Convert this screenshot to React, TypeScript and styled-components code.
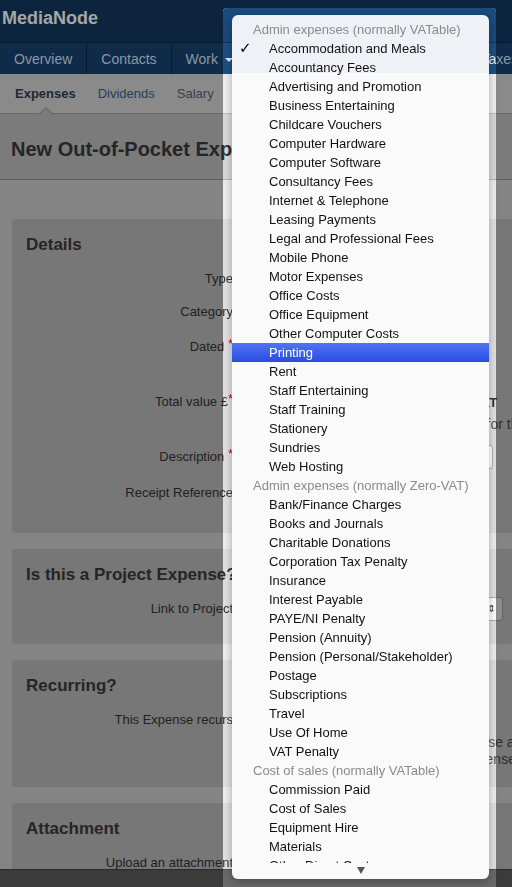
import React from "react";
import styled, { createGlobalStyle } from "styled-components";

const GlobalStyle = createGlobalStyle`
  html, body { margin: 0; padding: 0; overflow: hidden; }
  body {
    font-family: "Liberation Sans", Arial, sans-serif;
    background: #848484;
    width: 512px;
    height: 887px;
  }
`;

/* the page as seen through the modal dimming */
const DimScope = styled.div`
  --brand-bg: #0c243e;
  --brand-text: #a6a6a6;
  --nav-bg: #0f2b48;
  --nav-line: #081c31;
  --nav-text: #8a98a7;
  --sub-bg: #8a8a8a;
  --sub-line: #696969;
  --sub-active: #1d2833;
  --sub-link: #243f5c;
  --sub-muted: #36414d;
  --head-bg: #7b7b7b;
  --head-line: #616161;
  --title: #252525;
  --body-bg: #848484;
  --panel-bg: #777777;
  --label: #212121;
  --req: #a80000;
  --input-bg: #8c8c8c;
  --input-line: #616161;
  --text: #1f1f1f;
  --muted: #2c2c2c;
  --foot-bg: #3b3b3b;
  --foot-line: #2a2a2a;
`;

/* bright window right behind the open menu: same page, undimmed */
const LitScope = styled.div`
  --brand-bg: #1b4a7b;
  --brand-text: #e6e6e6;
  --nav-bg: #1e4f81;
  --nav-line: #123559;
  --nav-text: #e6edf4;
  --sub-bg: #f0f0f0;
  --sub-line: #c2c2c2;
  --sub-active: #333f4c;
  --sub-link: #3d6c9f;
  --sub-muted: #5a6f86;
  --head-bg: #dadada;
  --head-line: #b5b5b5;
  --title: #333;
  --body-bg: #eeeeee;
  --panel-bg: #e1e1e1;
  --label: #333;
  --req: #e00000;
  --input-bg: #ffffff;
  --input-line: #b0b0b0;
  --text: #333;
  --muted: #555;
  --foot-bg: #6a6a6a;
  --foot-line: #555;
  margin: -8px 0 0 -223px;
`;

const Page = styled.div`
  width: 540px;
  height: 887px;
  display: flex;
  flex-direction: column;
  overflow: hidden;
  background: var(--body-bg);
`;

const BrandBar = styled.header`
  flex: 0 0 42px;
  background: var(--brand-bg);
  padding-left: 2px;
`;

const Brand = styled.div`
  font-size: 18px;
  line-height: 36px;
  font-weight: bold;
  color: var(--brand-text);
`;

const NavBar = styled.nav`
  flex: 0 0 31px;
  width: 532px;
  background: var(--nav-bg);
  border-top: 1px solid var(--nav-line);
  display: flex;
`;

const NavTab = styled.div<{ $right?: boolean }>`
  display: flex;
  align-items: center;
  gap: 7px;
  padding: 0 14px;
  font-size: 14px;
  color: var(--nav-text);
  border-right: 1px solid var(--nav-line);
  ${(p) =>
    p.$right &&
    `margin-left: auto; border-right: none; border-left: 1px solid var(--nav-line);`}
`;

const Caret = styled.span`
  width: 0;
  height: 0;
  border-left: 4px solid transparent;
  border-right: 4px solid transparent;
  border-top: 4px solid var(--nav-text);
  margin-top: 2px;
`;

const SubNav = styled.div`
  flex: 0 0 39px;
  background: var(--sub-bg);
  border-bottom: 1px solid var(--sub-line);
  display: flex;
  padding-left: 4px;
`;

const SubTab = styled.div<{ $active?: boolean; $muted?: boolean }>`
  position: relative;
  display: flex;
  align-items: center;
  padding: 0 11px;
  font-size: 13px;
  color: ${(p) =>
    p.$active ? "var(--sub-active)" : p.$muted ? "var(--sub-muted)" : "var(--sub-link)"};
  font-weight: ${(p) => (p.$active ? "bold" : "normal")};
  ${(p) =>
    p.$active &&
    `&::after {
      content: "";
      position: absolute;
      left: 50%;
      bottom: -6px;
      width: 9px;
      height: 9px;
      margin-left: -4px;
      background: var(--head-bg);
      border-left: 1px solid var(--sub-line);
      border-top: 1px solid var(--sub-line);
      transform: rotate(45deg);
    }`}
`;

const PageHeader = styled.div`
  flex: 0 0 66px;
  box-sizing: border-box;
  padding: 6px 0 0 11px;
  background: var(--head-bg);
  border-bottom: 1px solid var(--head-line);
  display: flex;
  align-items: center;
`;

const PageTitle = styled.h1`
  margin: 0;
  font-size: 20px;
  font-weight: bold;
  color: var(--title);
  white-space: nowrap;
`;

const Main = styled.main`
  flex: 1;
  min-height: 0;
  overflow: hidden;
  padding: 39px 12px 0 12px;
`;

const Panel = styled.section`
  background: var(--panel-bg);
  border-radius: 4px;
  padding: 14px;
  margin-bottom: 16px;
`;

const PanelTitle = styled.h2`
  margin: 0 0 10px 0;
  font-size: 17px;
  line-height: 24px;
  font-weight: bold;
  color: var(--title);
`;

const Row = styled.div<{ $h: number }>`
  display: flex;
  height: ${(p) => p.$h}px;
`;

const Label = styled.label`
  flex: 0 0 207px;
  text-align: right;
  font-size: 13px;
  line-height: 24px;
  color: var(--label);
  white-space: nowrap;
`;

const Req = styled.span`
  color: var(--req);
  font-size: 13px;
  vertical-align: top;
  line-height: 18px;
`;

const Control = styled.div`
  margin-left: 10px;
  flex: 1;
  display: flex;
  flex-direction: column;
  gap: 2px;
`;

const ControlLine = styled.div`
  display: flex;
  align-items: center;
  gap: 10px;
  height: 24px;
`;

const Input = styled.div<{ $w: number }>`
  box-sizing: border-box;
  width: ${(p) => p.$w}px;
  height: 24px;
  background: var(--input-bg);
  border: 1px solid var(--input-line);
  border-radius: 3px;
  font-size: 13px;
  line-height: 22px;
  padding: 0 6px;
  color: var(--text);
`;

const SelectBox = styled(Input)`
  display: flex;
  justify-content: space-between;
  align-items: center;
`;

const Arrows = styled.span`
  font-family: "DejaVu Sans", sans-serif;
  font-size: 10px;
  color: var(--text);
`;

const Strong = styled.span`
  font-size: 13px;
  font-weight: bold;
  color: var(--text);
  white-space: nowrap;
`;

const Help = styled.div`
  font-size: 14px;
  line-height: 17px;
  color: var(--muted);
  white-space: nowrap;
`;

const Footer = styled.footer`
  flex: 0 0 17px;
  background: var(--foot-bg);
  border-top: 1px solid var(--foot-line);
`;

const Window = styled.div`
  position: fixed;
  left: 223px;
  top: 8px;
  width: 273px;
  height: 879px;
  overflow: hidden;
  border-radius: 4px 4px 0 0;
  z-index: 10;
`;

const Menu = styled.div`
  position: fixed;
  left: 232px;
  top: 15px;
  width: 257px;
  height: 864px;
  z-index: 20;
  background: linear-gradient(#eef2f6 0, #eef2f6 58px, #fafafa 58px);
  border-radius: 6px;
  box-shadow: 0 3px 10px rgba(0, 0, 0, 0.3);
  display: flex;
  flex-direction: column;
  overflow: hidden;
`;

const MenuList = styled.ul`
  list-style: none;
  margin: 0;
  padding: 5px 0 0 0;
  flex: 1;
  overflow: hidden;
`;

const Option = styled.li<{ $header?: boolean; $active?: boolean }>`
  position: relative;
  height: 19px;
  line-height: 19px;
  font-size: 13px;
  white-space: nowrap;
  padding-left: ${(p) => (p.$header ? 21 : 37)}px;
  color: ${(p) => (p.$active ? "#fff" : p.$header ? "#8a8a8a" : "#111")};
  background: ${(p) =>
    p.$active ? "linear-gradient(#5074f2, #2a4be0)" : "transparent"};
`;

const Check = styled.span`
  position: absolute;
  left: 7px;
  top: 0;
  font-family: "DejaVu Sans", sans-serif;
  font-weight: bold;
  font-size: 15px;
  color: #000;
`;

const ScrollArrow = styled.div`
  height: 16px;
  display: flex;
  justify-content: center;
  padding-top: 4px;
  box-sizing: border-box;
  &::before {
    content: "";
    width: 0;
    height: 0;
    border-left: 4px solid transparent;
    border-right: 4px solid transparent;
    border-top: 7px solid #555;
  }
`;

type Entry = { label: string; header?: boolean; checked?: boolean; active?: boolean };

const entries: Entry[] = [
  { label: "Admin expenses (normally VATable)", header: true },
  { label: "Accommodation and Meals", checked: true },
  { label: "Accountancy Fees" },
  { label: "Advertising and Promotion" },
  { label: "Business Entertaining" },
  { label: "Childcare Vouchers" },
  { label: "Computer Hardware" },
  { label: "Computer Software" },
  { label: "Consultancy Fees" },
  { label: "Internet & Telephone" },
  { label: "Leasing Payments" },
  { label: "Legal and Professional Fees" },
  { label: "Mobile Phone" },
  { label: "Motor Expenses" },
  { label: "Office Costs" },
  { label: "Office Equipment" },
  { label: "Other Computer Costs" },
  { label: "Printing", active: true },
  { label: "Rent" },
  { label: "Staff Entertaining" },
  { label: "Staff Training" },
  { label: "Stationery" },
  { label: "Sundries" },
  { label: "Web Hosting" },
  { label: "Admin expenses (normally Zero-VAT)", header: true },
  { label: "Bank/Finance Charges" },
  { label: "Books and Journals" },
  { label: "Charitable Donations" },
  { label: "Corporation Tax Penalty" },
  { label: "Insurance" },
  { label: "Interest Payable" },
  { label: "PAYE/NI Penalty" },
  { label: "Pension (Annuity)" },
  { label: "Pension (Personal/Stakeholder)" },
  { label: "Postage" },
  { label: "Subscriptions" },
  { label: "Travel" },
  { label: "Use Of Home" },
  { label: "VAT Penalty" },
  { label: "Cost of sales (normally VATable)", header: true },
  { label: "Commission Paid" },
  { label: "Cost of Sales" },
  { label: "Equipment Hire" },
  { label: "Materials" },
  { label: "Other Direct Costs" },
  { label: "Subcontractors" },
];

function ExpensePage() {
  return (
    <Page>
      <BrandBar>
        <Brand>MediaNode</Brand>
      </BrandBar>
      <NavBar>
        <NavTab>Overview</NavTab>
        <NavTab>Contacts</NavTab>
        <NavTab>
          Work <Caret />
        </NavTab>
        <NavTab>Accounts</NavTab>
        <NavTab $right>Taxes</NavTab>
      </NavBar>
      <SubNav>
        <SubTab $active>Expenses</SubTab>
        <SubTab>Dividends</SubTab>
        <SubTab $muted>Salary</SubTab>
      </SubNav>
      <PageHeader>
        <PageTitle>New Out-of-Pocket Expense Entry</PageTitle>
      </PageHeader>
      <Main>
        <Panel>
          <PanelTitle>Details</PanelTitle>
          <Row $h={33}>
            <Label>Type</Label>
            <Control>
              <ControlLine>
                <Help>Out-of-Pocket Expense</Help>
              </ControlLine>
            </Control>
          </Row>
          <Row $h={35}>
            <Label>Category</Label>
            <Control>
              <SelectBox $w={228}>
                Printing <Arrows>⇕</Arrows>
              </SelectBox>
            </Control>
          </Row>
          <Row $h={55}>
            <Label>
              Dated <Req>*</Req>
            </Label>
            <Control>
              <Input $w={110}>06/03/2013</Input>
            </Control>
          </Row>
          <Row $h={55}>
            <Label>
              Total value £<Req>*</Req>
            </Label>
            <Control>
              <ControlLine>
                <Input $w={110} />
                <SelectBox $w={64}>
                  Auto <Arrows>⇕</Arrows>
                </SelectBox>
                <Strong>£1.16 VAT</Strong>
              </ControlLine>
              <Help>Select Auto to use the normal VAT rate for the period</Help>
            </Control>
          </Row>
          <Row $h={36}>
            <Label>
              Description <Req>*</Req>
            </Label>
            <Control>
              <Input $w={250} />
            </Control>
          </Row>
          <Row $h={38}>
            <Label>Receipt Reference</Label>
            <Control>
              <Input $w={160} />
            </Control>
          </Row>
        </Panel>

        <Panel>
          <PanelTitle>Is this a Project Expense?</PanelTitle>
          <Row $h={33}>
            <Label>Link to Project</Label>
            <Control>
              <SelectBox $w={260}>
                (none) <Arrows>⇕</Arrows>
              </SelectBox>
            </Control>
          </Row>
        </Panel>

        <Panel>
          <PanelTitle>Recurring?</PanelTitle>
          <Row $h={65}>
            <Label>This Expense recurs</Label>
            <Control>
              <SelectBox $w={110}>
                Never <Arrows>⇕</Arrows>
              </SelectBox>
              <Help>
                A duplicate will be created of this expense after each period
                <br />
                Leave as Never to record a one-off expense
              </Help>
            </Control>
          </Row>
        </Panel>

        <Panel>
          <PanelTitle>Attachment</PanelTitle>
          <Row $h={40}>
            <Label>Upload an attachment</Label>
            <Control>
              <Help>Choose File&nbsp;&nbsp;No file chosen</Help>
            </Control>
          </Row>
        </Panel>
      </Main>
      <Footer />
    </Page>
  );
}

export default function App() {
  return (
    <>
      <GlobalStyle />
      <DimScope>
        <ExpensePage />
      </DimScope>
      <Window>
        <LitScope>
          <ExpensePage />
        </LitScope>
      </Window>
      <Menu>
        <MenuList>
          {entries.map((e) => (
            <Option key={e.label} $header={e.header} $active={e.active}>
              {e.checked && <Check>✓</Check>}
              {e.label}
            </Option>
          ))}
        </MenuList>
        <ScrollArrow />
      </Menu>
    </>
  );
}
